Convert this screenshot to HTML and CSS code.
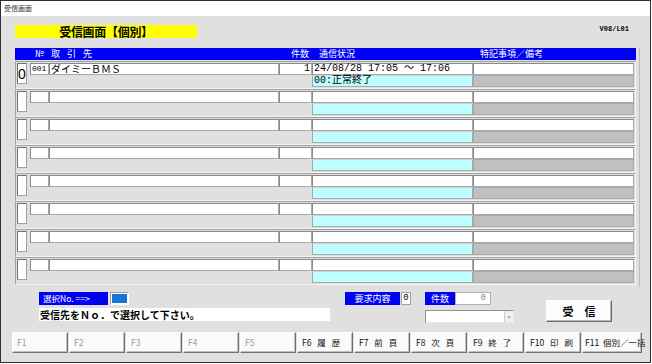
FILE: index.html
```html
<!DOCTYPE html>
<html lang="ja">
<head>
<meta charset="utf-8">
<title>受信画面</title>
<link rel="stylesheet" href="styles.css">
</head>
<body>
<div class="window">
  <div class="titlebar">受信画面</div>
  <div class="client">
    <div class="top">
      <div class="title">受信画面【個別】</div>
      <div class="ver">V08/L01</div>
    </div>

    <div class="list">
      <div class="head">
        <span class="h-name">№ 取 引 先</span>
        <span class="h-count">件数</span>
        <span class="h-comm">通信状況</span>
        <span class="h-rem">特記事項／備考</span>
      </div>

      <div class="row">
        <div class="c-num big">0</div>
        <div class="c-code mono">001</div>
        <div class="c-name">ダイミーＢＭＳ</div>
        <div class="c-count mono">1</div>
        <div class="c-comm mono">24/08/28 17:05 ～ 17:06</div>
        <div class="c-rem"></div>
        <div class="c-stat mono">00:正常終了</div>
        <div class="c-rem2"></div>
      </div>
      <div class="row">
        <div class="c-num"></div><div class="c-code"></div><div class="c-name"></div><div class="c-count"></div>
        <div class="c-comm"></div><div class="c-rem"></div><div class="c-stat"></div><div class="c-rem2"></div>
      </div>
      <div class="row">
        <div class="c-num"></div><div class="c-code"></div><div class="c-name"></div><div class="c-count"></div>
        <div class="c-comm"></div><div class="c-rem"></div><div class="c-stat"></div><div class="c-rem2"></div>
      </div>
      <div class="row">
        <div class="c-num"></div><div class="c-code"></div><div class="c-name"></div><div class="c-count"></div>
        <div class="c-comm"></div><div class="c-rem"></div><div class="c-stat"></div><div class="c-rem2"></div>
      </div>
      <div class="row">
        <div class="c-num"></div><div class="c-code"></div><div class="c-name"></div><div class="c-count"></div>
        <div class="c-comm"></div><div class="c-rem"></div><div class="c-stat"></div><div class="c-rem2"></div>
      </div>
      <div class="row">
        <div class="c-num"></div><div class="c-code"></div><div class="c-name"></div><div class="c-count"></div>
        <div class="c-comm"></div><div class="c-rem"></div><div class="c-stat"></div><div class="c-rem2"></div>
      </div>
      <div class="row">
        <div class="c-num"></div><div class="c-code"></div><div class="c-name"></div><div class="c-count"></div>
        <div class="c-comm"></div><div class="c-rem"></div><div class="c-stat"></div><div class="c-rem2"></div>
      </div>
      <div class="row">
        <div class="c-num"></div><div class="c-code"></div><div class="c-name"></div><div class="c-count"></div>
        <div class="c-comm"></div><div class="c-rem"></div><div class="c-stat"></div><div class="c-rem2"></div>
      </div>
    </div>

    <div class="bottom">
      <div class="sel">
        <span class="lbl lbl-sel">選択No. ==&gt;</span>
        <span class="selbox"><span class="selfill"></span></span>
      </div>
      <div class="req">
        <span class="lbl lbl-req">要求内容</span>
        <span class="reqbox mono">0</span>
      </div>
      <div class="cnt">
        <span class="lbl lbl-cnt">件数</span>
        <span class="cntbox mono">0</span>
      </div>
      <button class="recv">受　信</button>
      <div class="msg">受信先をＮｏ．で選択して下さい。</div>
      <div class="combo"><span class="arrow">⌄</span></div>
    </div>

    <div class="fkeys">
      <button class="fk off">F1</button>
      <button class="fk off">F2</button>
      <button class="fk off">F3</button>
      <button class="fk off">F4</button>
      <button class="fk off">F5</button>
      <button class="fk">F6 履 歴</button>
      <button class="fk">F7 前 頁</button>
      <button class="fk">F8 次 頁</button>
      <button class="fk">F9 終 了</button>
      <button class="fk">F10 印 刷</button>
      <button class="fk">F11 個別／一括</button>
    </div>
  </div>
</div>
</body>
</html>
```

FILE: styles.css
```css
* { box-sizing: border-box; }
html, body { margin: 0; padding: 0; background: #ffffff; }
body {
  font-family: "Noto Sans CJK JP", "Noto Sans", sans-serif;
  color: #000;
}
.mono { font-family: "Liberation Mono", "Noto Sans CJK JP", monospace; }

.window {
  width: 651px;
  height: 363px;
  border: 1px solid #303030;
  background: #e0e0e0;
  display: flex;
  flex-direction: column;
}
.titlebar {
  height: 15px;
  background: #ffffff;
  font-size: 7px;
  line-height: 15px;
  padding-left: 3px;
  color: #333;
}
.client {
  flex: 1;
  display: flex;
  flex-direction: column;
}

/* top */
.top {
  display: flex;
  align-items: flex-start;
  margin: 9px 0 0 14px;
  height: 13px;
}
.title {
  width: 182px;
  height: 13px;
  background: #ffff00;
  font-size: 12px;
  font-weight: bold;
  line-height: 13px;
  text-align: center;
  letter-spacing: -0.3px;
}
.ver {
  margin-left: auto;
  margin-right: 21px;
  font-family: "Liberation Mono", monospace;
  font-size: 7px;
  font-weight: bold;
  line-height: 9px;
}

/* list */
.list {
  margin: 10px 0 0 14px;
  width: 625px;
  border-right: 1px solid #bdbdbd;
  padding-bottom: 2px;
}
.head {
  width: 621px;
  height: 12px;
  background: #0000f5;
  color: #ffffff;
  font-size: 9px;
  line-height: 12px;
  display: grid;
  grid-template-columns: 264px 33px 161px 161px;
  margin-bottom: 1px;
}
.h-name { padding-left: 20px; word-spacing: 5px; }
.h-count { padding-left: 12px; }
.h-comm { padding-left: 7px; }
.h-rem { padding-left: 7px; }

.row {
  width: 621px;
  height: 28px;
  border: 1px solid #a0a0a0;
  border-right-color: #f4f4f4;
  border-bottom-color: #f4f4f4;
  padding: 1px 1px;
  display: grid;
  grid-template-columns: 10px 3px 19px 230px 33px 161px 161px;
  grid-template-rows: 12px 12px;
}
.row > div {
  font-size: 10px;
  line-height: 10px;
  white-space: nowrap;
}
.c-num {
  grid-column: 1; grid-row: 1 / 3;
  height: 21px;
  background: #fff;
  border: 1px solid #a0a0a0;
  border-top-color: #707070;
  border-left-color: #707070;
}
.c-num.big {
  font-size: 14px !important;
  line-height: 20px !important;
  font-family: "Liberation Sans", sans-serif;
  text-align: center;
}
.c-code, .c-name, .c-count, .c-comm, .c-rem {
  grid-row: 1;
  background: #ffffff;
  border: 1px solid #a8a8a8;
  border-top-color: #8a8a8a;
  border-left-color: #8a8a8a;
  padding-left: 1px;
}
.c-code { grid-column: 3; font-size: 8px !important; }
.c-name { grid-column: 4; }
.c-count { grid-column: 5; text-align: right; padding-right: 1px; }
.c-comm { grid-column: 6; }
.c-rem { grid-column: 7; }
.c-stat {
  grid-column: 6; grid-row: 2;
  background: #c0ffff;
  border: 1px solid #a8a8a8;
  border-top-color: #d0d0d0;
  padding-left: 1px;
}
.c-rem2 {
  grid-column: 7; grid-row: 2;
  background: #c0c0c0;
  border: 1px solid #a8a8a8;
}

/* bottom */
.bottom {
  margin: 5px 0 0 38px;
  display: grid;
  grid-template-columns: 306px 80px 121px 66px;
  grid-template-rows: 13px 13px;
  row-gap: 3px;
}
.lbl {
  display: inline-block;
  height: 13px;
  background: #0000f5;
  color: #fff;
  font-size: 9px;
  line-height: 13px;
  text-align: center;
}
.sel, .req, .cnt { display: flex; align-items: stretch; grid-row: 1; }
.sel { grid-column: 1; gap: 2px; }
.lbl-sel { width: 69px; padding-left: 4px; text-align: left; font-size: 8.5px; }
.selbox {
  width: 19px;
  height: 13px;
  border: 1px solid #a0a0a0;
  border-right-color: #fff;
  border-bottom-color: #fff;
  background: #fff;
  padding: 1px;
}
.selfill { display: block; width: 100%; height: 100%; background: #1476d6; }
.req { grid-column: 2; gap: 1px; }
.lbl-req { width: 55px; }
.reqbox {
  width: 10px; height: 13px;
  background: #fff;
  border: 1px solid #a0a0a0;
  font-size: 9px; line-height: 11px; text-align: center;
}
.cnt { grid-column: 3; }
.lbl-cnt { width: 30px; }
.cntbox {
  width: 36px; height: 13px;
  background: #fff;
  border: 1px solid #b0b0b0;
  font-size: 9px; line-height: 11px; text-align: right;
  padding-right: 4px; color: #888;
}
.msg {
  grid-column: 1; grid-row: 2;
  width: 291px;
  background: #fff;
  font-size: 10px;
  font-weight: bold;
  line-height: 13px;
  padding-left: 1px;
  white-space: nowrap;
}
.combo {
  grid-column: 3; grid-row: 2;
  width: 89px; height: 13px;
  margin-top: 2px;
  background: #fff;
  border: 1px solid #909090;
  border-right-color: #e8e8e8;
  border-bottom-color: #e8e8e8;
  display: flex;
  justify-content: flex-end;
}
.arrow {
  width: 9px;
  background: #f0f0f0;
  border-left: 1px solid #d0d0d0;
  font-size: 7px;
  line-height: 8px;
  text-align: center;
  color: #555;
}
.recv {
  grid-column: 4; grid-row: 1 / 3;
  width: 66px; height: 22px;
  margin-top: 8px;
  background: #fcfcfc;
  border: 1px solid;
  border-color: #ffffff #6a6a6a #6a6a6a #ffffff;
  box-shadow: inset -1px -1px 0 #b8b8b8;
  font-family: "Noto Sans CJK JP", sans-serif;
  font-size: 11px;
  font-weight: bold;
  padding: 0;
  line-height: 19px;
}

/* function keys */
.fkeys {
  margin: 11px 0 0 11px;
  display: flex;
  gap: 1px;
}
.fk {
  width: 56px;
  height: 21px;
  padding: 0 0 0 4px;
  text-align: left;
  background: #fafafa;
  border: 1px solid;
  border-color: #ffffff #707070 #707070 #ffffff;
  box-shadow: inset -1px -1px 0 #c0c0c0;
  font-family: "Noto Sans CJK JP", sans-serif;
  font-size: 8.5px;
  line-height: 19px;
  color: #111;
  white-space: nowrap;
  word-spacing: 4px;
}
.fk.off { color: #999; }
.fk:last-child { width: 60px; padding-left: 2px; word-spacing: 2px; }
```
